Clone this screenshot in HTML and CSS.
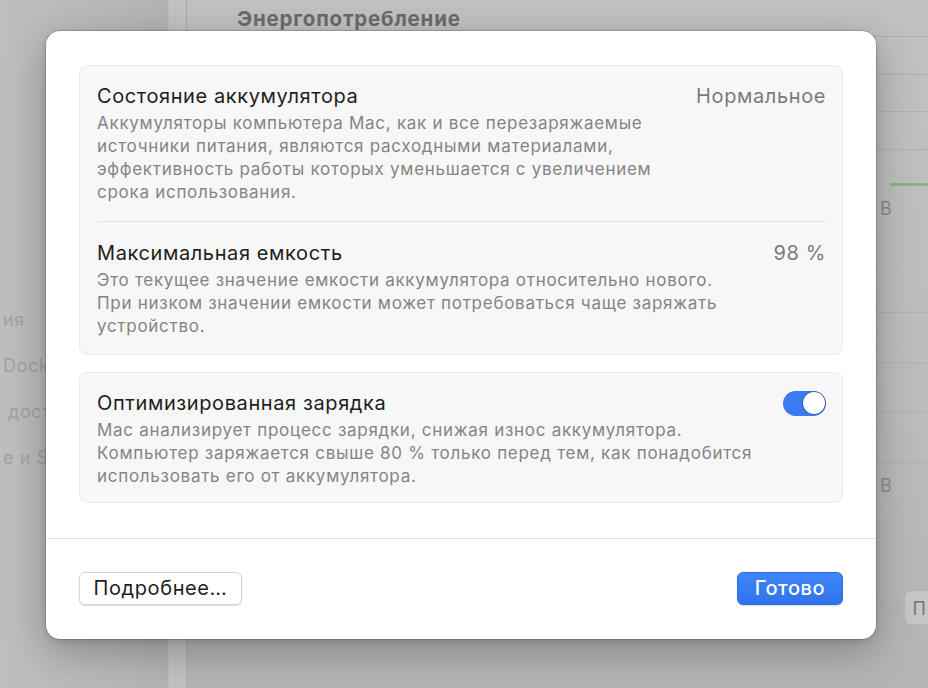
FILE: index.html
```html
<!DOCTYPE html>
<html lang="ru">
<head>
<meta charset="utf-8">
<title>Аккумулятор</title>
<link rel="stylesheet" href="styles.css">
</head>
<body>
<div class="window">
  <aside class="sidebar">
    <div class="side-item">ия</div>
    <div class="side-item">Dock</div>
    <div class="side-item side-indent">доступ</div>
    <div class="side-item">e и Siri</div>
  </aside>
  <main class="main">
    <div class="toolbar"><h1 class="title">Энергопотребление</h1></div>
    <div class="chart">
      <div class="gridline"></div>
      <div class="gridline"></div>
      <div class="gridline"></div>
      <div class="chart-data"><span class="green"></span></div>
      <div class="axis-label">В</div>
    </div>
    <div class="chart chart2">
      <div class="gridline"></div>
      <div class="gridline"></div>
      <div class="gridline"></div>
      <div class="gridline"></div>
      <div class="axis-label">В</div>
    </div>
    <div class="main-footer"><span class="bg-button">П</span></div>
  </main>
</div>

<div class="sheet">
  <section class="card">
    <div class="row row-first">
      <div class="row-head">
        <span class="row-title">Состояние аккумулятора</span>
        <span class="row-value">Нормальное</span>
      </div>
      <p class="row-desc">Аккумуляторы компьютера Mac, как и все перезаряжаемые<br>источники питания, являются расходными материалами,<br>эффективность работы которых уменьшается с увеличением<br>срока использования.</p>
    </div>
    <div class="row row-divided">
      <div class="row-head">
        <span class="row-title">Максимальная емкость</span>
        <span class="row-value">98 %</span>
      </div>
      <p class="row-desc">Это текущее значение емкости аккумулятора относительно нового.<br>При низком значении емкости может потребоваться чаще заряжать<br>устройство.</p>
    </div>
  </section>
  <section class="card">
    <div class="row row-last">
      <div class="row-head">
        <span class="row-title">Оптимизированная зарядка</span>
        <span class="toggle"><span class="knob"></span></span>
      </div>
      <p class="row-desc">Mac анализирует процесс зарядки, снижая износ аккумулятора.<br>Компьютер заряжается свыше 80 % только перед тем, как понадобится<br>использовать его от аккумулятора.</p>
    </div>
  </section>
  <div class="sheet-sep"></div>
  <div class="actions">
    <button class="btn btn-plain">Подробнее…</button>
    <button class="btn btn-primary">Готово</button>
  </div>
</div>
</body>
</html>
```
FILE: styles.css
```css
* { box-sizing: border-box; }
html, body { margin: 0; padding: 0; }
body {
  width: 928px;
  height: 688px;
  overflow: hidden;
  background: #bdbdbd;
  font-family: Inter, "Noto Sans", "Liberation Sans", sans-serif;
  position: relative;
}
.window {
  display: flex;
  height: 688px;
}
.sidebar {
  width: 187px;
  flex: none;
  background: linear-gradient(90deg, #bebebe 0%, #b9b9b9 55%, #b3b3b3 90%, #c2c2c2 91%);
  border-right: 1px solid #acacac;
  padding-top: 308px;
  display: flex;
  flex-direction: column;
  gap: 22px;
  overflow: hidden;
}
.side-item {
  font-size: 18px;
  line-height: 24px;
  letter-spacing: 0.6px;
  color: #a2a2a2;
  white-space: nowrap;
  padding-left: 3px;
}
.side-indent { padding-left: 8px; }
.main {
  flex: 1;
  background: linear-gradient(180deg, #c1c1c1 0%, #bcbcbc 60%, #b4b4b4 100%);
  display: flex;
  flex-direction: column;
}
.toolbar {
  height: 37px;
  border-bottom: 1px solid #b0b0b0;
  padding-left: 50px;
}
.title {
  margin: 0;
  font-size: 20.5px;
  line-height: 37px;
  letter-spacing: 0.8px;
  font-weight: 700;
  color: #6b6b6b;
}
.chart {
  display: flex;
  flex-direction: column;
  padding-left: 20px;
}
.gridline {
  height: 37.5px;
  border-bottom: 1px solid #b1b1b1;
}
.chart-data {
  height: 36px;
  display: flex;
  align-items: flex-end;
  justify-content: flex-end;
}
.green {
  width: 38px;
  height: 3px;
  background: #86b882;
}
.axis-label {
  font-size: 18px;
  line-height: 22px;
  color: #8d8d8d;
  padding-left: 673px;
  margin-top: 12px;
}
.chart2 { margin-top: 81px; }
.chart2 .gridline { height: 50px; }
.chart2 .gridline:first-child { height: 12px; }
.chart2 .axis-label { margin-top: 12px; }
.main-footer {
  margin-top: 93px;
  display: flex;
  justify-content: flex-end;
}
.bg-button {
  display: inline-block;
  height: 35px;
  line-height: 35px;
  padding: 0 2px 0 8px;
  background: #c6c6c6;
  border: 1px solid #b4b4b4;
  border-right: none;
  border-radius: 7px 0 0 7px;
  font-size: 18px;
  color: #777;
}

.sheet {
  position: absolute;
  left: 46px;
  top: 31px;
  width: 830px;
  height: 608px;
  background: #ffffff;
  border-radius: 14px;
  box-shadow: 0 0 0 0.5px rgba(0,0,0,0.28), 0 12px 40px rgba(0,0,0,0.28), 0 2px 6px rgba(0,0,0,0.12);
  padding: 34px 0 0;
  display: flex;
  flex-direction: column;
}
.card {
  margin: 0 33px 17px;
  background: #f7f7f7;
  border: 1px solid #ebebeb;
  border-radius: 8px;
}
.row {
  padding: 18px 16px 16px 17px;
}
.row-first { padding-bottom: 17px; }
.row-divided {
  border-top: 1px solid #e3e3e3;
  padding-top: 19px;
  margin: 0 16px 0 17px;
  padding-left: 0;
  padding-right: 0;
}
.row-last { padding-bottom: 14px; }
.row-head {
  display: flex;
  justify-content: space-between;
  align-items: center;
  height: 24px;
}
.row-title {
  font-size: 20px;
  line-height: 24px;
  letter-spacing: 0.6px;
  color: #1e1e1e;
}
.row-value {
  font-size: 20px;
  line-height: 24px;
  letter-spacing: 0.6px;
  color: #7b7b7b;
}
.row-desc {
  margin: 4px 0 0;
  font-size: 17px;
  line-height: 23px;
  letter-spacing: 0.72px;
  color: #848484;
}
.toggle {
  width: 43px;
  height: 25px;
  border-radius: 13px;
  background: #3a7bf0;
  display: flex;
  align-items: center;
  justify-content: flex-end;
  padding: 0 1.5px;
}
.knob {
  width: 22px;
  height: 22px;
  border-radius: 50%;
  background: #fff;
  box-shadow: 0 0 0 0.8px rgba(30,40,70,0.45);
}
.sheet-sep {
  margin-top: 18px;
  border-top: 1px solid #e2e2e2;
}
.actions {
  display: flex;
  justify-content: space-between;
  padding: 33px 33px 0;
}
.btn {
  font-family: Inter, "Noto Sans", "Liberation Sans", sans-serif;
  font-size: 20px;
  letter-spacing: 0.6px;
  height: 33px;
  border-radius: 6px;
  padding: 0;
  line-height: 31px;
}
.btn-plain {
  width: 163px;
  background: #fff;
  color: #1e1e1e;
  border: 1px solid #d6d6d6;
  box-shadow: 0 1px 1.5px rgba(0,0,0,0.14);
}
.btn-primary {
  width: 106px;
  color: #fff;
  font-weight: 500;
  background: linear-gradient(180deg, #3f86f8 0%, #2f73ec 100%);
  border: 1px solid #2c6ddf;
  box-shadow: 0 1px 1.5px rgba(0,0,0,0.14);
}
```
